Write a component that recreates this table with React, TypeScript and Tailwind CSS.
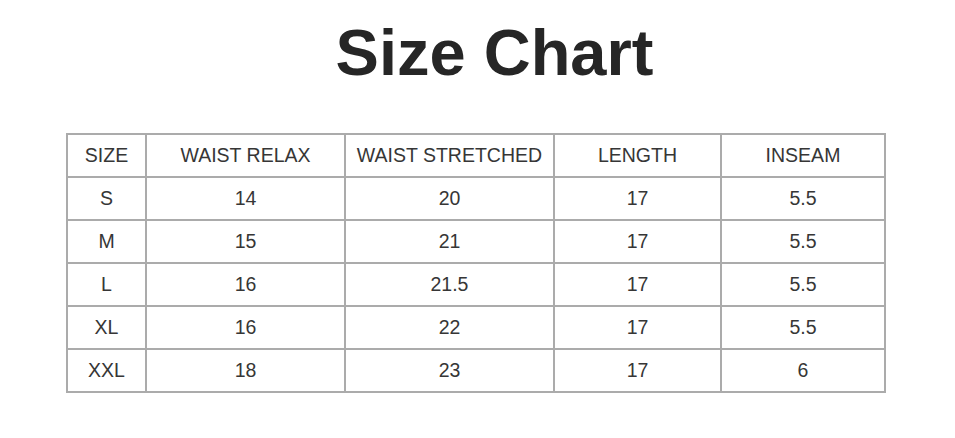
const headers = ["SIZE", "WAIST RELAX", "WAIST STRETCHED", "LENGTH", "INSEAM"];

const rows = [
  ["S", "14", "20", "17", "5.5"],
  ["M", "15", "21", "17", "5.5"],
  ["L", "16", "21.5", "17", "5.5"],
  ["XL", "16", "22", "17", "5.5"],
  ["XXL", "18", "23", "17", "6"],
];

export default function App() {
  return (
    <div
      className="w-[955px] h-[438px] bg-white overflow-hidden"
      style={{ fontFamily: '"Liberation Sans", Arial, sans-serif' }}
    >
      {/* title */}
      <h1 className="pt-[20px] pl-[34px] text-center text-[65px] leading-none font-bold text-[#262626]">
        Size Chart
      </h1>

      {/* table */}
      <div className="mt-[48px] ml-[66px] w-fit grid grid-cols-[79px_199px_209px_167px_164px] border-t-2 border-l-2 border-[#ababab] text-[19.5px] text-[#363636]">
        {headers.map((h) => (
          <div key={h} className="h-[43px] flex items-center justify-center border-r-2 border-b-2 border-[#ababab]">
            {h}
          </div>
        ))}
        {rows.map((row, i) =>
          row.map((cell, j) => (
            <div key={`${i}-${j}`} className="h-[43px] flex items-center justify-center border-r-2 border-b-2 border-[#ababab]">
              {cell}
            </div>
          ))
        )}
      </div>
    </div>
  );
}
